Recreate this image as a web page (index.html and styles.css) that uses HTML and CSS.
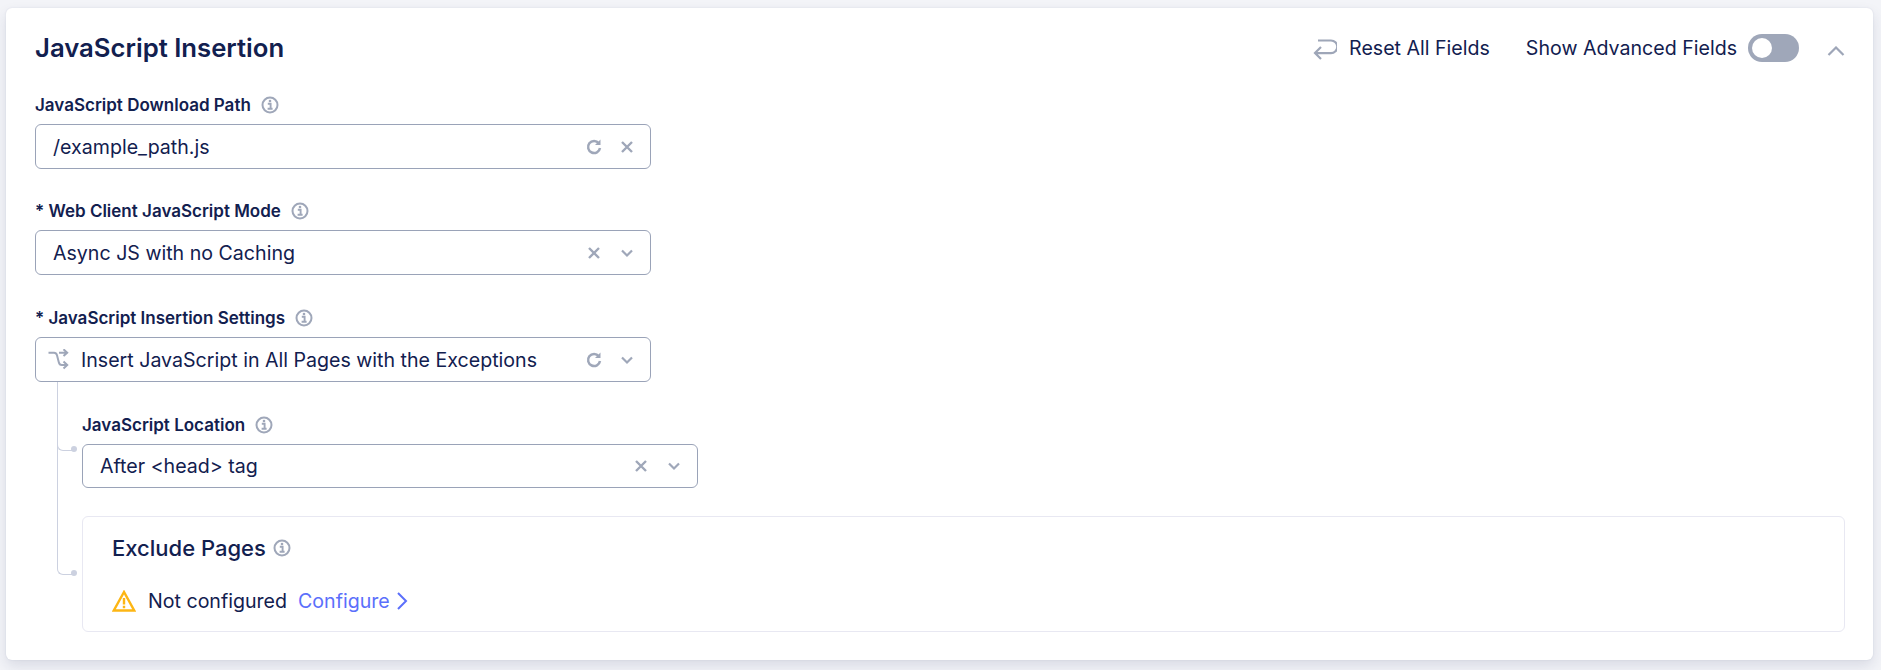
FILE: index.html
```html
<!DOCTYPE html>
<html lang="en">
<head>
  <meta charset="UTF-8" />
  <title>JavaScript Insertion</title>
  <link rel="stylesheet" href="styles.css">
</head>
<body>
  <section class="card">
    <!-- Header -->
    <header class="card-header">
      <h2 class="card-title">JavaScript Insertion</h2>
      <div class="card-actions">
        <span class="reset">
          <svg class="icon-reset" viewBox="0 0 24 24" fill="none"><path d="M5 4.500h13a6.300 6.300 0 0 1 0 12.600H2M8 11l-6 6 6 6"/></svg>
          Reset All Fields
        </span>
        <span class="advanced">
          Show Advanced Fields
          <span class="toggle"><span class="toggle-knob"></span></span>
        </span>
        <svg class="icon-collapse" viewBox="0 0 18 10" fill="none"><path d="M1.500 9L9 1.500 16.500 9"/></svg>
      </div>
    </header>

    <!-- Fields -->
    <div class="field">
      <label class="label">JavaScript Download Path <svg class="icon-info"><use href="#info"/></svg></label>
      <div class="input">
        <span class="input-text">/example_path.js</span>
        <svg class="icon-sm"><use href="#refresh"/></svg>
        <svg class="icon-sm"><use href="#close"/></svg>
      </div>
    </div>

    <div class="field field-mode">
      <label class="label">* Web Client JavaScript Mode <svg class="icon-info"><use href="#info"/></svg></label>
      <div class="input">
        <span class="input-text">Async JS with no Caching</span>
        <svg class="icon-sm"><use href="#close"/></svg>
        <svg class="icon-sm"><use href="#chevron"/></svg>
      </div>
    </div>

    <div class="field field-last">
      <label class="label">* JavaScript Insertion Settings <svg class="icon-info"><use href="#info"/></svg></label>
      <div class="input input-lead">
        <svg class="icon-shuffle" viewBox="0 0 22 22" fill="none"><path d="M.5 3.700h5.500c1.500 0 2.500.8 3 2.500l1.800 7c.4 1.800 1.500 2.800 3 2.800h5M11 3.700h8M15.500.3l3.700 3.400-3.700 3.400M15.500 12.600l3.700 3.400-3.700 3.400"/></svg>
        <span class="input-text">Insert JavaScript in All Pages with the Exceptions</span>
        <svg class="icon-sm"><use href="#refresh"/></svg>
        <svg class="icon-sm"><use href="#chevron"/></svg>
      </div>
    </div>

    <div class="nested">
      <div class="branch branch-first">
        <label class="label">JavaScript Location <svg class="icon-info"><use href="#info"/></svg></label>
        <div class="input input-location">
          <span class="input-text">After &lt;head&gt; tag</span>
          <svg class="icon-sm"><use href="#close"/></svg>
          <svg class="icon-sm"><use href="#chevron"/></svg>
        </div>
      </div>

      <div class="branch branch-last">
        <div class="panel">
          <div class="panel-title">Exclude Pages <svg class="icon-info"><use href="#info"/></svg></div>
          <div class="panel-status">
            <svg class="icon-warn" viewBox="0 0 24 22" fill="none"><path d="M12 2L1.800 20.500h20.400z"/><path class="warn-mark" d="M12 8v6.500M12 15.800v2.400"/></svg>
            <span class="status-text">Not configured</span>
            <a class="configure">Configure
              <svg class="icon-next" viewBox="0 0 12 20" fill="none"><path d="M2 2l8 8-8 8"/></svg>
            </a>
          </div>
        </div>
      </div>
    </div>
  </section>

  <!-- Icon sprites -->
  <svg class="sprites">
    <symbol id="info" viewBox="0 0 18 18">
      <circle cx="9" cy="9" r="7.500" fill="none" stroke="currentColor" stroke-width="2"/>
      <path d="M6.800 7.800h2.800v4.400M6.600 12.800h5" fill="none" stroke="currentColor" stroke-width="1.900"/>
      <circle cx="9" cy="5" r="1.300" fill="currentColor"/>
    </symbol>
    <symbol id="refresh" viewBox="0 0 20 20">
      <path d="M14.800 6.300A6 6 0 1 0 16 11" fill="none" stroke="currentColor" stroke-width="2.500"/>
      <path d="M16.500 2.500v5.500H11z" fill="currentColor"/>
    </symbol>
    <symbol id="close" viewBox="0 0 20 20">
      <path d="M5 5l10 10M15 5L5 15" fill="none" stroke="currentColor" stroke-width="2.400"/>
    </symbol>
    <symbol id="chevron" viewBox="0 0 20 20">
      <path d="M5 7.500l5 5 5-5" fill="none" stroke="currentColor" stroke-width="2.200"/>
    </symbol>
  </svg>
</body>
</html>
```

FILE: styles.css
```css
/* ---------- Global Reset & Typography ---------- */
* {
  box-sizing: border-box;
  margin: 0;
  padding: 0;
}
html, body {
  height: 100%;
  font-family: Inter, 'Noto Sans', sans-serif;
  background-color: #f3f4f8;
  color: #12204f; /* dark navy */
  overflow: hidden;
}
body {
  padding: 8px 8px 0 6px;
}
.sprites {
  display: none;
}

/* ---------- Card ---------- */
.card {
  height: 652px;
  background-color: #ffffff;
  border-radius: 6px;
  box-shadow: 0 0 2px rgba(30, 40, 90, 0.1), 0 6px 14px rgba(30, 40, 90, 0.12);
  padding: 16px 28px 0 29px;
}
.card-header {
  display: flex;
  align-items: center;
  justify-content: space-between;
  height: 48px;
  margin-bottom: 21px;
}
.card-title {
  margin-bottom: 2px;
  font-size: 25.700px;
  font-weight: 600;
}
.card-actions {
  display: flex;
  align-items: center;
  font-size: 19.600px;
}
.reset {
  display: flex;
  align-items: center;
  gap: 12px;
  margin-right: 36px;
}
.icon-reset {
  width: 24px;
  height: 24px;
  stroke: #9ea6b8;
  stroke-width: 2.200;
}
.advanced {
  display: flex;
  align-items: center;
  gap: 11px;
  margin-right: 28px;
}
.toggle {
  display: block;
  width: 51px;
  height: 28px;
  border-radius: 14px;
  background-color: #9fa7b9;
  padding: 4px;
}
.toggle-knob {
  display: block;
  width: 20px;
  height: 20px;
  border-radius: 50%;
  background-color: #ffffff;
}
.icon-collapse {
  width: 18px;
  height: 10px;
  stroke: #9ea6b8;
  stroke-width: 2.200;
  margin-top: 6px;
}

/* ---------- Form Fields ---------- */
.field {
  margin-bottom: 30px;
}
.field-mode {
  margin-bottom: 31px;
}
.field-last {
  margin-bottom: 0;
}
.label {
  display: flex;
  align-items: center;
  gap: 10px;
  height: 24px;
  margin-bottom: 7px;
  font-size: 17px;
  font-weight: 600;
}
.icon-info {
  width: 18px;
  height: 18px;
  color: #9fa7b9;
}
.input {
  display: flex;
  align-items: center;
  gap: 13px;
  width: 616px;
  height: 45px;
  border: 1px solid #9aa3b8;
  border-radius: 6px;
  padding: 0 13px 0 17px;
  font-size: 19.600px;
}
.input-lead {
  padding-left: 12px;
}
.input-location {
  height: 44px;
}
.input-text {
  flex: 1;
}
.icon-sm {
  width: 20px;
  height: 20px;
  color: #9fa7b9;
}
.icon-shuffle {
  width: 22px;
  height: 22px;
  margin-right: -2px;
  stroke: #9fa7b9;
  stroke-width: 2;
}

/* ---------- Nested Rows & Connectors ---------- */
.nested {
  margin-left: 22px;
  padding-left: 25px;
}
.branch {
  position: relative;
}
.branch-first {
  padding-top: 31px;
  margin-bottom: 28px;
}
.branch::before {
  content: "";
  position: absolute;
  left: -25px;
  width: 16px;
  border-left: 1px solid #ccd1e0;
  border-bottom: 1px solid #ccd1e0;
  border-bottom-left-radius: 6px;
}
.branch::after {
  content: "";
  position: absolute;
  left: -11px;
  width: 6px;
  height: 6px;
  border-radius: 50%;
  background-color: #ccd1e0;
}
.branch-first::before {
  top: 0;
  height: 68px;
}
.branch-first::after {
  top: 64px;
}
.branch-last::before {
  top: -110px;
  height: 168px;
}
.branch-last::after {
  top: 54px;
}

/* ---------- Exclude Pages Panel ---------- */
.panel {
  height: 116px;
  border: 1px solid #e8e8f2;
  border-radius: 6px;
  padding: 18px 29px 0;
}
.panel-title {
  display: flex;
  align-items: center;
  gap: 7px;
  height: 25px;
  font-size: 22px;
  font-weight: 500;
}
.panel-status {
  display: flex;
  align-items: center;
  height: 24px;
  margin-top: 29px;
  font-size: 19.600px;
}
.icon-warn {
  width: 24px;
  height: 22px;
  margin-right: 12px;
  stroke: #fdb614;
  stroke-width: 2.400;
}
.status-text {
  margin-right: 11px;
}
.configure {
  display: flex;
  align-items: center;
  gap: 6px;
  color: #5b6ffb;
}
.icon-next {
  width: 12px;
  height: 20px;
  stroke: #5b6ffb;
  stroke-width: 2;
}
```
